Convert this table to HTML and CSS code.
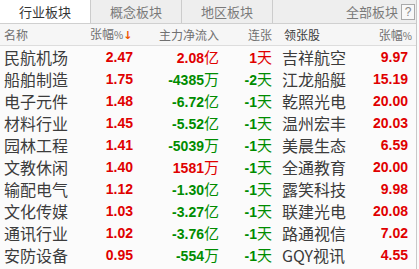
FILE: index.html
```html
<!DOCTYPE html>
<html>
<head>
<meta charset="utf-8">
<link rel="stylesheet" href="styles.css">
</head>
<body>
<div class="panel">
  <div class="tabs">
    <div class="tab active">行业板块</div>
    <div class="tab">概念板块</div>
    <div class="tab">地区板块</div>
    <div class="tab-fill">
      <span class="all">全部板块</span>
      <span class="help">?</span>
    </div>
  </div>
  <div class="row head">
    <div class="c name">名称</div>
    <div class="c pct hpct">张幅<span class="pc">%</span><span class="arrow">↓</span></div>
    <div class="c flow">主力净流入</div>
    <div class="c streak">连张</div>
    <div class="c stock hstock">领张股</div>
    <div class="c pct2 hpct2">张幅<span class="pc">%</span></div>
  </div>
  <div class="row"><div class="c name">民航机场</div><div class="c pct up">2.47</div><div class="c flow up">2.08<span class="u">亿</span></div><div class="c streak up">1<span class="u">天</span></div><div class="c stock">吉祥航空</div><div class="c pct2 up">9.97</div></div>
  <div class="row"><div class="c name">船舶制造</div><div class="c pct up">1.75</div><div class="c flow dn">-4385<span class="u">万</span></div><div class="c streak dn">-2<span class="u">天</span></div><div class="c stock">江龙船艇</div><div class="c pct2 up">15.19</div></div>
  <div class="row"><div class="c name">电子元件</div><div class="c pct up">1.48</div><div class="c flow dn">-6.72<span class="u">亿</span></div><div class="c streak dn">-1<span class="u">天</span></div><div class="c stock">乾照光电</div><div class="c pct2 up">20.00</div></div>
  <div class="row"><div class="c name">材料行业</div><div class="c pct up">1.45</div><div class="c flow dn">-5.52<span class="u">亿</span></div><div class="c streak dn">-1<span class="u">天</span></div><div class="c stock">温州宏丰</div><div class="c pct2 up">20.03</div></div>
  <div class="row"><div class="c name">园林工程</div><div class="c pct up">1.41</div><div class="c flow dn">-5039<span class="u">万</span></div><div class="c streak dn">-1<span class="u">天</span></div><div class="c stock">美晨生态</div><div class="c pct2 up">6.59</div></div>
  <div class="row"><div class="c name">文教休闲</div><div class="c pct up">1.40</div><div class="c flow up">1581<span class="u">万</span></div><div class="c streak dn">-1<span class="u">天</span></div><div class="c stock">全通教育</div><div class="c pct2 up">20.00</div></div>
  <div class="row"><div class="c name">输配电气</div><div class="c pct up">1.12</div><div class="c flow dn">-1.30<span class="u">亿</span></div><div class="c streak dn">-1<span class="u">天</span></div><div class="c stock">露笑科技</div><div class="c pct2 up">9.98</div></div>
  <div class="row"><div class="c name">文化传媒</div><div class="c pct up">1.03</div><div class="c flow dn">-3.27<span class="u">亿</span></div><div class="c streak dn">-1<span class="u">天</span></div><div class="c stock">联建光电</div><div class="c pct2 up">20.08</div></div>
  <div class="row"><div class="c name">通讯行业</div><div class="c pct up">1.02</div><div class="c flow dn">-3.76<span class="u">亿</span></div><div class="c streak dn">-1<span class="u">天</span></div><div class="c stock">路通视信</div><div class="c pct2 up">7.02</div></div>
  <div class="row"><div class="c name">安防设备</div><div class="c pct up">0.95</div><div class="c flow dn">-554<span class="u">万</span></div><div class="c streak dn">-1<span class="u">天</span></div><div class="c stock">GQY视讯</div><div class="c pct2 up">4.55</div></div>
</div>
</body>
</html>
```
FILE: styles.css
```css
html, body {
  margin: 0;
  padding: 0;
  background: #fbfbfb;
}
body {
  font-family: "Noto Sans CJK SC", "Noto Sans", sans-serif;
  overflow: hidden;
}
.panel {
  width: 417px;
  height: 269px;
  box-sizing: border-box;
  border-right: 1px solid #c8c8c8;
  background: #fbfbfb;
  overflow: hidden;
}
.tabs {
  display: flex;
  height: 23px;
  border-bottom: 1px solid #d0d0d0;
  background: #eeeeee;
}
.tab {
  width: 90px;
  border-right: 1px solid #cccccc;
  display: flex;
  align-items: center;
  justify-content: center;
  font-size: 13px;
  color: #7a7a7a;
  background: #eeeeee;
  line-height: 1;
}
.tab.active {
  background: #ffffff;
  color: #333333;
}
.tab-fill {
  flex: 1;
  display: flex;
  align-items: center;
  justify-content: flex-end;
  gap: 3px;
  padding-right: 1px;
}
.all {
  font-size: 13px;
  color: #7a7a7a;
  line-height: 1;
}
.help {
  width: 12px;
  height: 14px;
  border: 1px solid #aaaaaa;
  background: #f8f8f8;
  font-family: "Liberation Sans", sans-serif;
  font-size: 12px;
  color: #888888;
  display: flex;
  align-items: center;
  justify-content: center;
  line-height: 1;
}
.row {
  display: grid;
  grid-template-columns: 86px 43px 86px 53px 100px 36px;
  padding-left: 4px;
  height: 22px;
  align-items: center;
  line-height: 1;
}
.row.head {
  height: 21px;
  background: #f6f6f6;
  border-bottom: 1px solid #dddddd;
  font-size: 12px;
  color: #707070;
}
.c {
  white-space: nowrap;
}
.name {
  font-size: 16px;
  color: #3c3c3c;
}
.head .name {
  font-size: 12px;
  color: #707070;
}
.pct, .flow, .streak, .pct2 {
  text-align: right;
  font-family: "Liberation Sans", sans-serif;
  font-weight: bold;
  font-size: 14px;
}
.head .c {
  font-family: "Noto Sans CJK SC", sans-serif;
  font-weight: normal;
  font-size: 12px;
}
.hpct {
  padding-right: 5px;
}
.hpct2 {
  margin-right: -4px;
  overflow: visible;
}
.pc {
  font-size: 10px;
}
.arrow {
  color: #ee5500;
  font-family: "DejaVu Sans", sans-serif;
  font-size: 11px;
  font-weight: bold;
}
.stock {
  padding-left: 10px;
  font-size: 16px;
  color: #3c3c3c;
}
.hstock {
  padding-left: 12px;
}
.u {
  font-family: "Noto Sans CJK SC", sans-serif;
  font-weight: normal;
  font-size: 15px;
}
.up {
  color: #e00000;
}
.dn {
  color: #008c00;
}
```
